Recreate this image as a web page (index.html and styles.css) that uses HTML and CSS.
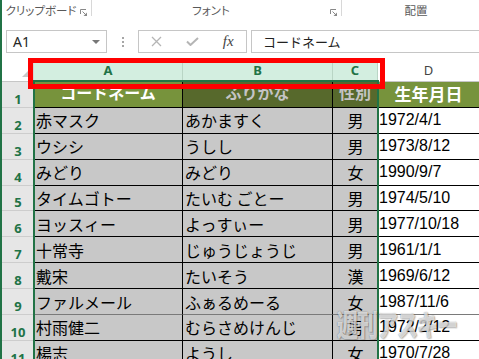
FILE: index.html
```html
<!DOCTYPE html>
<html lang="ja">
<head>
    <meta charset="UTF-8">
    <title>コードネーム一覧</title>
    <link rel="stylesheet" href="styles.css">
</head>
<body>
    <div class="app">
        <div class="ribbon">
            <div class="group g-clip">
                <span class="label">クリップボード</span>
                <svg class="launcher" width="7" height="7" viewBox="0 0 7 7"><path d="M0.5 5V0.5H6" fill="none" stroke="#888"/><path d="M2.5 2.5L6 6" stroke="#888"/><path d="M7 3.5V7H3.5Z" fill="#888"/></svg>
            </div>
            <div class="group g-font">
                <span class="label">フォント</span>
                <svg class="launcher" width="7" height="7" viewBox="0 0 7 7"><path d="M0.5 5V0.5H6" fill="none" stroke="#888"/><path d="M2.5 2.5L6 6" stroke="#888"/><path d="M7 3.5V7H3.5Z" fill="#888"/></svg>
            </div>
            <div class="group g-align">
                <span class="label">配置</span>
            </div>
        </div>

        <div class="formula-bar">
            <div class="name-box">
                <span>A1</span>
                <span class="caret"></span>
            </div>
            <div class="grip">
                <svg width="2" height="10" viewBox="0 0 2 10"><rect y="0" width="2" height="2" fill="#a6a6a6"/><rect y="4" width="2" height="2" fill="#a6a6a6"/><rect y="8" width="2" height="2" fill="#a6a6a6"/></svg>
            </div>
            <div class="fx-buttons">
                <svg width="11" height="11" viewBox="0 0 11 11"><path d="M1 1L10 10M10 1L1 10" stroke="#b5b5b5" stroke-width="1.3"/></svg>
                <svg width="13" height="9" viewBox="0 0 13 9"><path d="M1 4.5L4.5 8L12 1" fill="none" stroke="#b5b5b5" stroke-width="2"/></svg>
                <span class="fx">fx</span>
            </div>
            <div class="formula">コードネーム</div>
        </div>

        <div class="sheet">
            <div class="row head">
                <div class="corner"><span class="corner-mark"></span></div>
                <div class="col-head sel">A</div>
                <div class="col-head sel">B</div>
                <div class="col-head sel">C</div>
                <div class="col-head">D</div>
            </div>

            <div class="row">
                <div class="num">1</div>
                <div class="cell title">コードネーム</div>
                <div class="cell title dim">ふりがな</div>
                <div class="cell title dim">性別</div>
                <div class="cell title big">生年月日</div>
            </div>
            <div class="row">
                <div class="num">2</div>
                <div class="cell">赤マスク</div>
                <div class="cell">あかますく</div>
                <div class="cell sex">男</div>
                <div class="cell date">1972/4/1</div>
            </div>
            <div class="row">
                <div class="num">3</div>
                <div class="cell">ウシシ</div>
                <div class="cell">うしし</div>
                <div class="cell sex">男</div>
                <div class="cell date">1973/8/12</div>
            </div>
            <div class="row">
                <div class="num">4</div>
                <div class="cell">みどり</div>
                <div class="cell">みどり</div>
                <div class="cell sex">女</div>
                <div class="cell date">1990/9/7</div>
            </div>
            <div class="row">
                <div class="num">5</div>
                <div class="cell">タイムゴトー</div>
                <div class="cell">たいむ ごとー</div>
                <div class="cell sex">男</div>
                <div class="cell date">1974/5/10</div>
            </div>
            <div class="row">
                <div class="num">6</div>
                <div class="cell">ヨッスィー</div>
                <div class="cell">よっすぃー</div>
                <div class="cell sex">男</div>
                <div class="cell date">1977/10/18</div>
            </div>
            <div class="row">
                <div class="num">7</div>
                <div class="cell">十常寺</div>
                <div class="cell">じゅうじょうじ</div>
                <div class="cell sex">男</div>
                <div class="cell date">1961/1/1</div>
            </div>
            <div class="row">
                <div class="num">8</div>
                <div class="cell">戴宋</div>
                <div class="cell">たいそう</div>
                <div class="cell sex">漢</div>
                <div class="cell date">1969/6/12</div>
            </div>
            <div class="row soft">
                <div class="num">9</div>
                <div class="cell">ファルメール</div>
                <div class="cell">ふぁるめーる</div>
                <div class="cell sex">女</div>
                <div class="cell date">1987/11/6</div>
            </div>
            <div class="row">
                <div class="num">10</div>
                <div class="cell">村雨健二</div>
                <div class="cell">むらさめけんじ</div>
                <div class="cell sex">男</div>
                <div class="cell date">1972/2/12</div>
            </div>
            <div class="row">
                <div class="num">11</div>
                <div class="cell">楊志</div>
                <div class="cell">ようし</div>
                <div class="cell sex">女</div>
                <div class="cell date">1970/7/28</div>
            </div>

            <!-- 選択範囲と赤枠は表の上に重ねる -->
            <div class="selection"></div>
            <div class="callout"></div>
            <div class="watermark">週刊アスキー</div>
        </div>
    </div>
</body>
</html>
```

FILE: styles.css
```css
body {
    margin: 0;
    width: 479px;
    height: 359px;
    overflow: hidden;
    background-color: #fff;
    font-family: "Noto Sans CJK JP", sans-serif;
}
.app {
    height: 359px;
    border-left: 2px solid #217346;
    overflow: hidden;
}

/* リボン */
.ribbon {
    display: flex;
    height: 21px;
}
.group {
    display: flex;
    align-items: flex-start;
    flex: none;
    height: 16px;
    box-sizing: border-box;
    border-right: 1px solid #d8d8d8;
}
.g-clip { width: 90px; }
.g-font { width: 250px; }
.g-align { width: 148px; border-right: none; }
.label {
    flex: 1;
    text-align: center;
    font-size: 11.5px;
    line-height: 21px;
    color: #595959;
    font-feature-settings: "palt";
}
.launcher {
    margin: 9px 4px 0 0;
}

/* 数式バー */
.formula-bar {
    display: flex;
    align-items: flex-start;
    height: 38px;
    padding-top: 9px;
    box-sizing: border-box;
}
.name-box {
    flex: none;
    display: flex;
    align-items: center;
    width: 101px;
    height: 23px;
    margin-left: 4px;
    padding: 0 6px;
    box-sizing: border-box;
    border: 1px solid #c6c6c6;
    font-family: "Noto Sans", sans-serif;
    font-size: 14px;
    color: #262626;
}
.caret {
    margin-left: auto;
    border-top: 4px solid #777;
    border-left: 4px solid transparent;
    border-right: 4px solid transparent;
}
.grip {
    flex: none;
    display: flex;
    justify-content: center;
    width: 31px;
    padding-top: 7px;
}
.fx-buttons {
    flex: none;
    display: grid;
    grid-template-columns: repeat(3, 1fr);
    align-items: center;
    justify-items: center;
    width: 109px;
    height: 23px;
    box-sizing: border-box;
    border: 1px solid #c6c6c6;
}
.fx {
    font-family: "Liberation Serif", serif;
    font-style: italic;
    font-size: 15px;
    color: #444;
    line-height: 15px;
}
.formula {
    flex: none;
    width: 240px;
    height: 23px;
    margin-left: 4px;
    padding-left: 11px;
    box-sizing: border-box;
    border: 1px solid #c6c6c6;
    font-size: 13px;
    line-height: 21px;
    color: #222;
}

/* シート */
.sheet {
    position: relative;
}
.row {
    display: grid;
    grid-template-columns: 32px 149px 150px 45px 1fr;
    height: 25.9px;
}
.row.head {
    height: 23px;
}
.corner {
    display: flex;
    justify-content: flex-end;
    align-items: flex-end;
    padding: 0 5px 4px 0;
    background-color: #fff;
    border-right: 1px solid #d4d4d4;
    border-bottom: 1px solid #c6c6c6;
}
.corner-mark {
    border-left: 6px solid transparent;
    border-bottom: 6px solid #c8c8c8;
}
.col-head {
    display: flex;
    justify-content: center;
    align-items: center;
    background-color: #fff;
    border-bottom: 1px solid #c6c6c6;
    font-family: "Noto Sans", sans-serif;
    font-size: 13px;
    color: #444;
}
.col-head.sel {
    background-color: #d3eee0;
    border-right: 1px solid #b9d5c5;
    color: #217346;
    font-weight: bold;
}
.num {
    display: flex;
    justify-content: center;
    align-items: flex-end;
    background-color: #e6e6e6;
    border-bottom: 1px solid #cdcdcd;
    font-family: "Noto Sans", sans-serif;
    font-weight: bold;
    font-size: 13px;
    line-height: 16px;
    color: #217346;
}
.cell {
    display: flex;
    align-items: center;
    padding-left: 2px;
    background-color: #c8c8c8;
    border-right: 1px solid #000;
    border-bottom: 1px solid #000;
    font-size: 16px;
    color: #000;
    white-space: pre;
    overflow: hidden;
}
.cell.sex {
    justify-content: center;
    padding-left: 0;
    border-right: none;
}
.cell.date {
    padding-left: 1px;
    background-color: #fff;
    border-right: none;
    font-family: "Liberation Sans", sans-serif;
    font-size: 16px;
}
.cell.title {
    justify-content: center;
    padding: 0 0 4px 0;
    box-sizing: border-box;
    background-color: #77933c;
    color: #fff;
    font-weight: bold;
}
.cell.title.dim {
    background-color: #57692c;
    color: #c4c4c4;
}
.cell.title.big {
    padding-bottom: 1px;
    font-size: 17px;
    border-right: none;
}
.row.soft .cell {
    border-bottom-color: #7a7a7a;
}

.selection {
    position: absolute;
    left: 31px;
    top: 21px;
    width: 346px;
    height: 300px;
    box-sizing: border-box;
    border: 2px solid #217346;
    border-bottom: none;
}
.callout {
    position: absolute;
    left: 26px;
    top: -1px;
    width: 357px;
    height: 31px;
    box-sizing: border-box;
    border: 5px solid #ff0000;
}
.watermark {
    position: absolute;
    left: 335px;
    top: 249px;
    font-size: 21px;
    font-weight: 900;
    letter-spacing: -1px;
    line-height: 22px;
    color: rgba(255, 255, 255, 0.7);
    text-shadow: 0 0 1px rgba(0, 0, 0, 0.45), 1px 1px 1px rgba(0, 0, 0, 0.2);
    transform: scaleY(1.4);
    transform-origin: top left;
}
```
